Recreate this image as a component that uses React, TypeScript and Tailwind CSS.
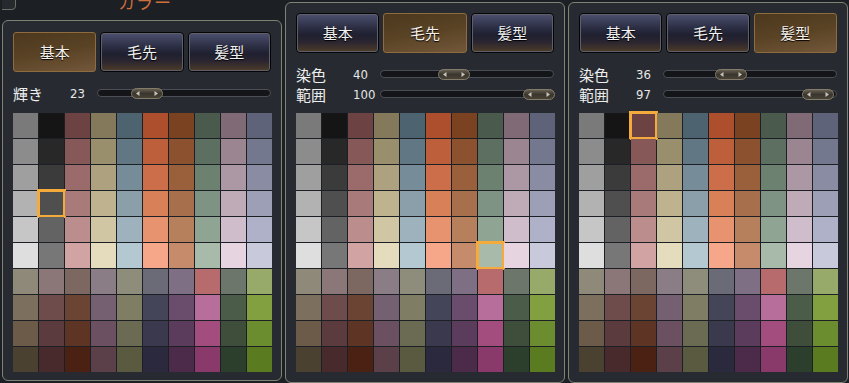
import React from "react";

const TOP: string[][] = [
  ["#7a7a7a", "#8c8c8c", "#9f9f9f", "#b2b2b2", "#c6c6c6", "#dedede"],
  ["#151515", "#282828", "#3b3b3b", "#4f4f4f", "#636363", "#777777"],
  ["#6d4242", "#875858", "#9b6a6a", "#a97a7a", "#bb8d8d", "#d1a3a3"],
  ["#84795a", "#9a8f6d", "#ada180", "#beb28f", "#d0c6a3", "#e4dcbc"],
  ["#4d6370", "#617784", "#768c98", "#8a9faa", "#9db2bd", "#b3c8d1"],
  ["#ad4f2c", "#bd5f3b", "#cb6e49", "#d88058", "#e79370", "#f6a789"],
  ["#7a4220", "#8c5230", "#9a603b", "#a76f4b", "#b7805d", "#c68b6b"],
  ["#4a5b4e", "#5d6f61", "#6d8171", "#7e9383", "#90a494", "#a8bbab"],
  ["#7f6a76", "#9a8591", "#ac98a5", "#bfaab8", "#d0bdcb", "#e6d5e0"],
  ["#5f6379", "#74788e", "#898ca3", "#9c9fb5", "#aeb1c7", "#c8cadc"],
];

const BOTTOM: string[][] = [
  ["#8e8979", "#8b7777", "#7c6860", "#8a7d86", "#8e8d7c", "#6a6b76", "#7f6f85", "#b86b6c", "#6d766a", "#98aa6a"],
  ["#7d6f5d", "#6e4c4c", "#6b4434", "#746070", "#7f7e64", "#45455a", "#6a4c6c", "#b86e9a", "#4b5c49", "#82a040"],
  ["#6b5b48", "#5b3b3d", "#5e3424", "#6b5061", "#6b6b54", "#3b394e", "#5c3c5c", "#a24d7d", "#3e4e3b", "#6c8c30"],
  ["#4b4131", "#492a2c", "#4b2114", "#5b4049", "#5a5a41", "#2b293d", "#4b2a4a", "#8a3a6a", "#2c3e2c", "#5b7b20"],
];

const ROWS: string[][] = [
  ...[0, 1, 2, 3, 4, 5].map((r) => TOP.map((col) => col[r])),
  ...BOTTOM,
];

const JP = "font-['Noto_Sans_CJK_JP','Noto_Sans',sans-serif]";

function Thumb() {
  return (
    <svg width="32" height="11" viewBox="0 0 32 11">
      <defs>
        <linearGradient id="tg" x1="0" y1="0" x2="0" y2="1">
          <stop offset="0" stopColor="#6a6354" />
          <stop offset="0.5" stopColor="#3a362e" />
          <stop offset="1" stopColor="#4a4436" />
        </linearGradient>
      </defs>
      <rect x="0.5" y="0.5" width="31" height="10" rx="5" fill="url(#tg)" stroke="#847c6a" />
      <path d="M8.5 3 L5 5.5 L8.5 8 Z" fill="#c9c4ba" />
      <path d="M23.5 3 L27 5.5 L23.5 8 Z" fill="#c9c4ba" />
    </svg>
  );
}

function Slider({ label, value }: { label: string; value: number }) {
  const trackW = 174;
  const left = (value / 100) * (trackW - 32);
  return (
    <div className="flex items-center h-[20px]">
      <div className={`w-[57px] text-[15px] leading-none text-[#eeeeee] ${JP}`}>{label}</div>
      <div className="w-[27px] text-[13px] leading-none text-[#e6e6e6] font-['DejaVu_Sans_Condensed','Liberation_Sans_Narrow','Liberation_Sans',sans-serif]">
        {value}
      </div>
      <div className="relative w-[174px] h-[8px] rounded-full bg-[#131518] border border-[#4b4f55]">
        <div className="absolute top-[-2.5px]" style={{ left: `${left}px` }}>
          <Thumb />
        </div>
      </div>
    </div>
  );
}

function Btn({ label, active }: { label: string; active: boolean }) {
  if (active) {
    return (
      <div
        className={`h-[40px] rounded-[3px] border border-[#8f6c3d] bg-[linear-gradient(170deg,#4c381e_0%,#5a4325_50%,#73573a_100%)] flex items-center justify-center text-[15px] text-[#f4f0ea] [text-shadow:0_1px_1px_#000] ${JP}`}
      >
        {label}
      </div>
    );
  }
  return (
    <div className="h-[40px] rounded-[4px] border border-[#050507] p-0">
      <div
        className={`h-full rounded-[3px] border border-[#5e5f68] bg-[linear-gradient(180deg,#4b4e6c_0%,#2c2e44_35%,#1f2030_55%,#2a2530_75%,#4a3a28_100%)] flex items-center justify-center text-[15px] text-[#f0f0f0] [text-shadow:0_1px_1px_#000] ${JP}`}
      >
        {label}
      </div>
    </div>
  );
}

function Grid({ sel }: { sel: [number, number] }) {
  return (
    <div className="grid grid-cols-[repeat(10,25px)] auto-rows-[25px] gap-px w-[259px] bg-[#1c1f23]">
      {ROWS.map((row, r) =>
        row.map((c, ci) => (
          <div key={`${r}-${ci}`} className="relative" style={{ backgroundColor: c }}>
            {sel[0] === r && sel[1] === ci && (
              <div className="absolute inset-[-2px] border-[3px] border-[#f5aa3c]" />
            )}
          </div>
        ))
      )}
    </div>
  );
}

function Panel({
  active,
  sliders,
  sel,
  className,
  gridMt,
}: {
  active: number;
  sliders: { label: string; value: number }[];
  sel: [number, number];
  className: string;
  gridMt: string;
}) {
  const names = ["基本", "毛先", "髪型"];
  return (
    <div
      className={`w-[280px] rounded-[6px] border border-[#7f8373] bg-[#272b31] px-[10px] flex flex-col ${className}`}
    >
      <div className="grid grid-cols-3 gap-[4px] w-[258px]">
        {names.map((n, i) => (
          <Btn key={n} label={n} active={i === active} />
        ))}
      </div>
      <div className="mt-[11px] flex flex-col">
        {sliders.map((s) => (
          <Slider key={s.label} label={s.label} value={s.value} />
        ))}
      </div>
      <div className={gridMt}>
        <Grid sel={sel} />
      </div>
    </div>
  );
}

export default function App() {
  return (
    <div className="w-[849px] h-[383px] overflow-hidden bg-[#1c1f24] flex gap-[3px] pl-[2px]">
      <div className="w-[280px] flex flex-col">
        <div className="h-[20px] flex items-start overflow-hidden">
          <div className="ml-[-2px] mt-[-4px] w-[16px] h-[14px] rounded-br-[4px] rounded-bl-[2px] border border-[#6b6f66] bg-[#262a2f]" />
          <div
            className={`ml-[102px] mt-[-7px] text-[17px] leading-none text-[#cf6f3a] tracking-[1px] ${JP}`}
          >
            カラー
          </div>
        </div>
        <Panel
          active={0}
          sliders={[{ label: "輝き", value: 23 }]}
          sel={[3, 1]}
          className="h-[361px] pt-[11px]"
          gridMt="mt-[10px]"
        />
      </div>
      <Panel
        active={1}
        sliders={[
          { label: "染色", value: 40 },
          { label: "範囲", value: 100 },
        ]}
        sel={[5, 7]}
        className="mt-[2px] h-[381px] pt-[10px]"
        gridMt="mt-[9px]"
      />
      <Panel
        active={2}
        sliders={[
          { label: "染色", value: 36 },
          { label: "範囲", value: 97 },
        ]}
        sel={[0, 2]}
        className="mt-[2px] h-[381px] pt-[10px]"
        gridMt="mt-[9px]"
      />
    </div>
  );
}
